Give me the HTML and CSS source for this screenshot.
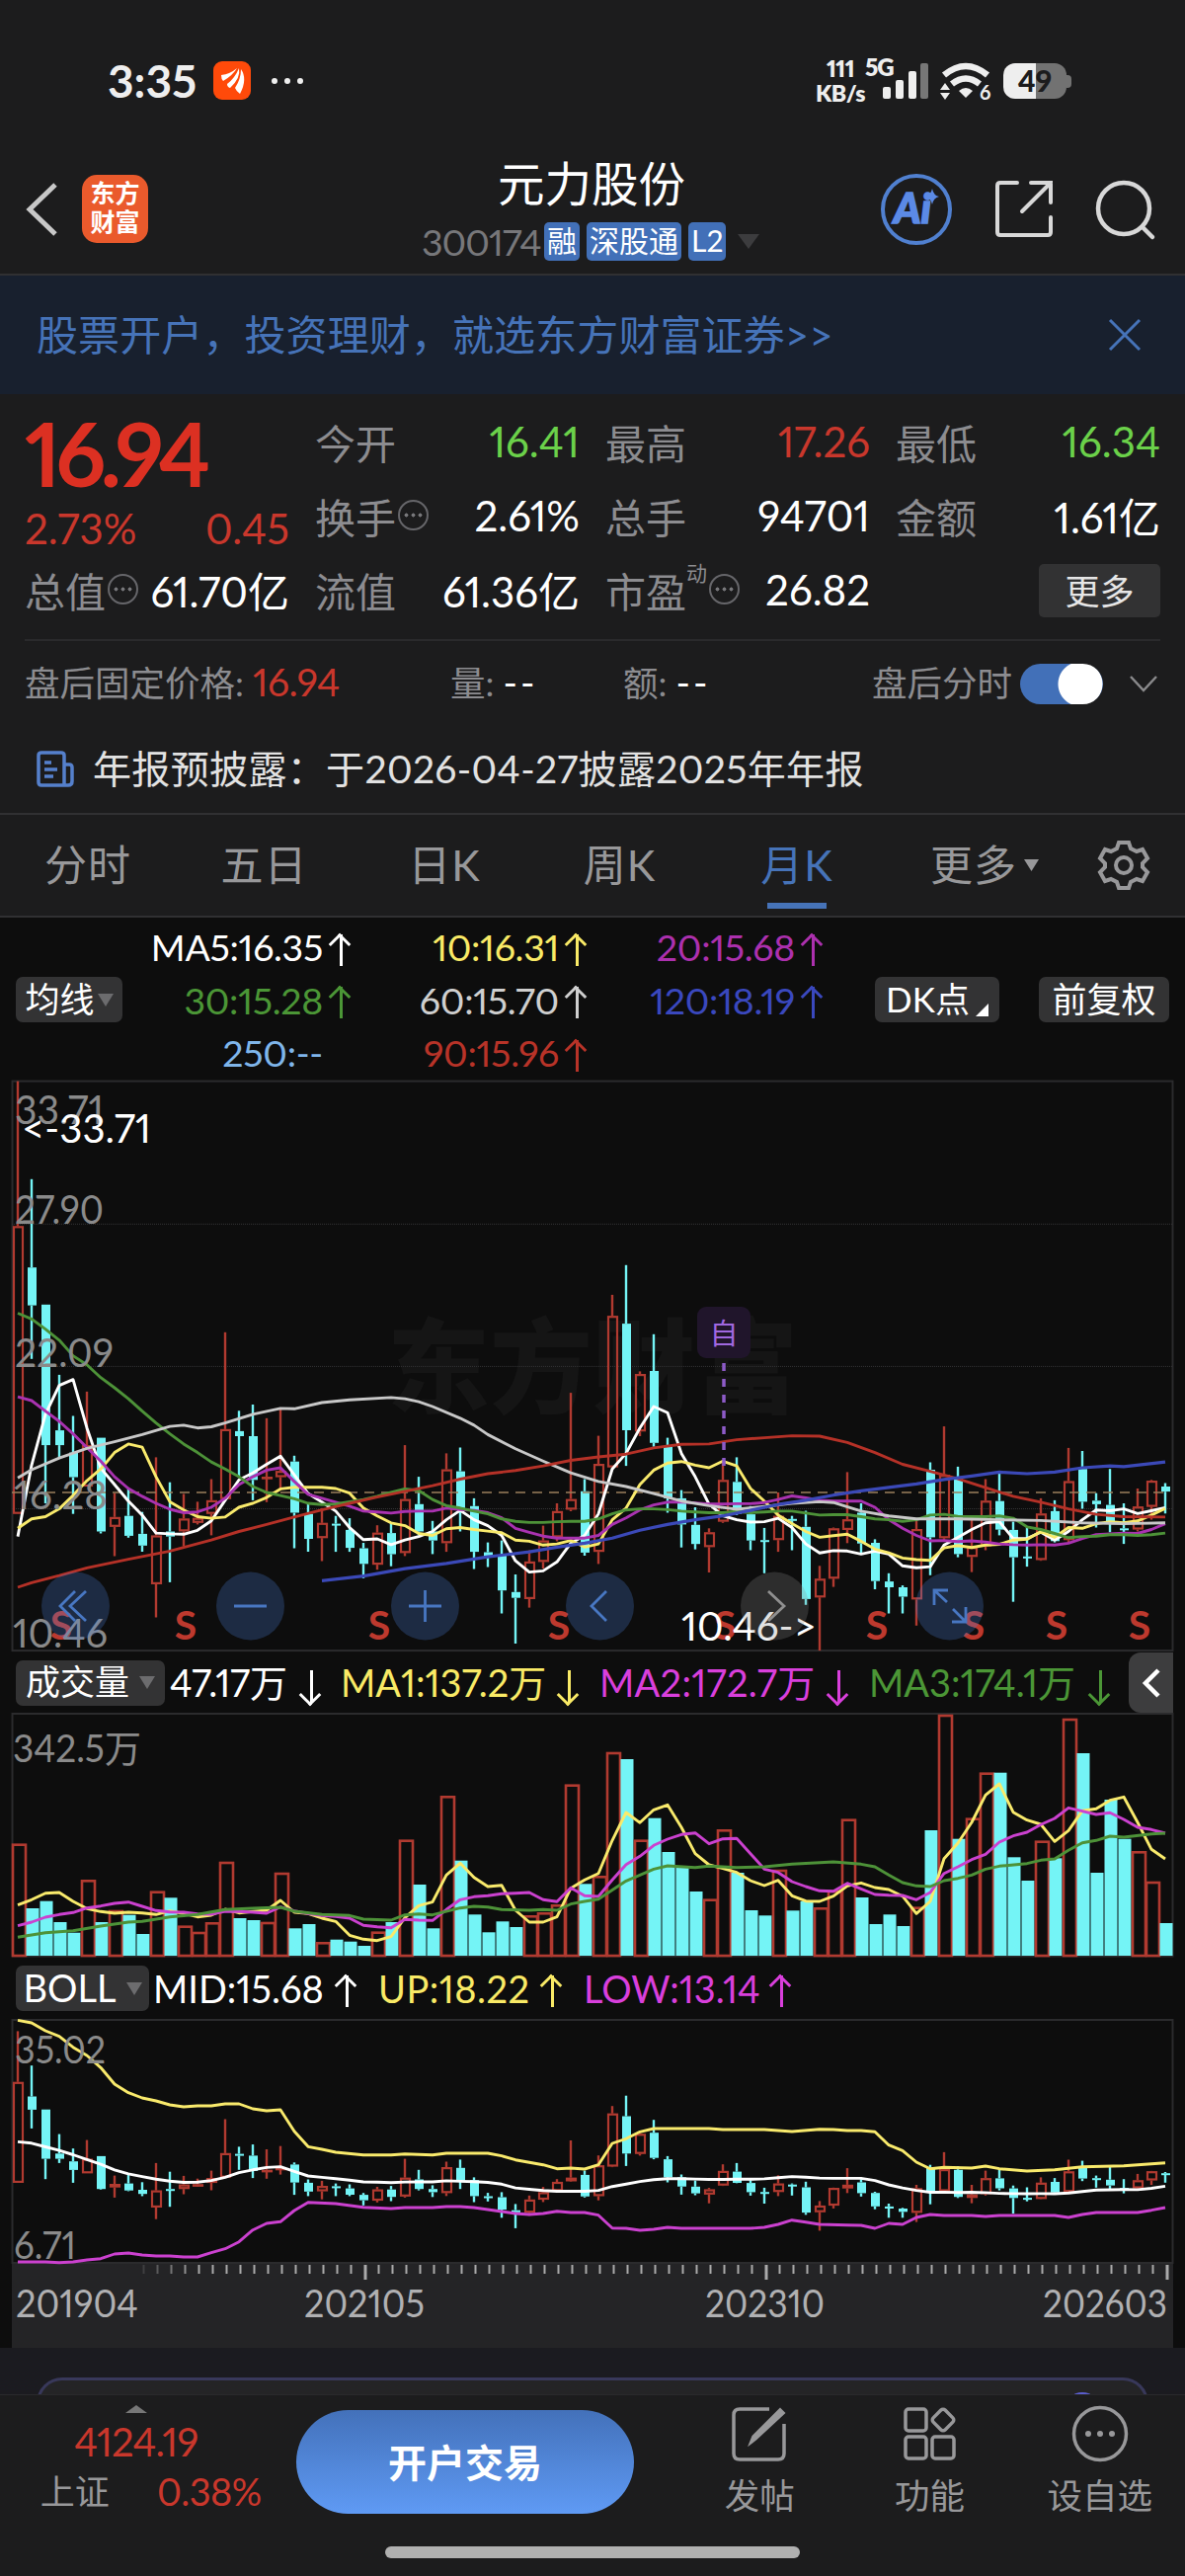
FILE: index.html
```html
<!doctype html>
<html lang="zh-CN">
<head>
  <meta charset="utf-8">
  <title>元力股份 300174</title>
  <link rel="stylesheet" href="styles.css">
</head>
<body>
  <div class="status">
    <span class="clock">3:35</span>
    <svg class="app-dot" width="38" height="39" viewBox="0 0 38 39">
      <rect width="38" height="39" rx="9" fill="#ff4a0a"/>
      <path d="M8 14Q17 13 24 7Q20 14 10 20Q8 18 8 14ZM14 23Q22 17 26 7Q28 17 17 27Q14 26 14 23ZM22 27Q28 18 28 8Q35 18 27 33Q23 30 22 27Z" fill="#fff"/>
    </svg>
    <svg width="34" height="8" viewBox="0 0 34 8" fill="#eee"><circle cx="4" cy="4" r="3"/><circle cx="17" cy="4" r="3"/><circle cx="30" cy="4" r="3"/></svg>
    <div class="net"><span>111</span><span>KB/s</span></div>
    <div class="signal">
      <b>5G</b>
      <svg width="46" height="36" viewBox="0 0 46 36" fill="#eee">
        <rect x="0" y="24" width="8" height="12" rx="2"/><rect x="13" y="17" width="8" height="19" rx="2"/><rect x="26" y="8" width="8" height="28" rx="2"/><rect x="38" y="0" width="8" height="36" rx="2" fill="#777"/>
      </svg>
    </div>
    <svg class="wifi" width="52" height="38" viewBox="0 0 52 38" fill="none" stroke="#eee">
      <path d="M4 13Q26 -5 48 13" stroke-width="6.500"/>
      <path d="M12 22Q26 11 40 22" stroke-width="6.500"/>
      <path d="M19 29Q26 23 33 29L26 36Z" fill="#eee" stroke="none"/>
      <path d="M0 28L5 21L10 28ZM0 31L5 38L10 31Z" fill="#eee" stroke="none"/>
      <text x="40" y="38" font-size="20" font-weight="700" fill="#eee" stroke="none">6</text>
    </svg>
    <div class="battery"><span>49</span></div>
  </div>

  <header class="header">
    <svg class="back" width="34" height="56" viewBox="0 0 34 56" fill="none" stroke="#c8c8c8" stroke-width="5"><path d="M30 3L4 28L30 53"/></svg>
    <div class="logo"><span>东方</span><span>财富</span></div>
    <div class="stock">
      <div class="stock-name">元力股份</div>
      <div class="stock-code"><span class="code">300174</span><i>融</i><i>深股通</i><i>L2</i><svg width="22" height="15" viewBox="0 0 22 15"><path d="M0 0H22L11 15Z" fill="#3c3c3e"/></svg></div>
    </div>
    <div class="header-icons">
      <svg width="72" height="72" viewBox="0 0 72 72">
        <circle cx="36" cy="36" r="34" fill="none" stroke="#5080d0" stroke-width="4"/>
        <text x="13" y="49.500" font-size="42" font-weight="900" font-style="italic" fill="#5b8ae6" stroke="#5b8ae6" stroke-width="1.500">Ai</text>
        <path d="M52 15Q53.500 22 59 23Q53.500 24 52 31Q50.500 24 44 23Q50.500 22 52 15Z" fill="#5b8ae6"/>
      </svg>
      <svg width="60" height="60" viewBox="0 0 60 60" fill="none" stroke="#d8d8d8" stroke-width="4" stroke-linecap="round">
        <path d="M23 3H6Q3 3 3 6V53Q3 56 6 56H54Q57 56 57 53V38"/><path d="M37 3H57V23M57 3L28 32"/>
      </svg>
      <svg width="62" height="62" viewBox="0 0 62 62" fill="none" stroke="#d8d8d8" stroke-width="4.500" stroke-linecap="round"><circle cx="29" cy="30" r="26"/><path d="M48 49L58 59"/></svg>
    </div>
  </header>

  <div class="banner">
    <span>股票开户，投资理财，就选东方财富证券&gt;&gt;</span>
    <svg width="32" height="32" viewBox="0 0 32 32" stroke="#4673b8" stroke-width="3"><path d="M1 1L31 31M31 1L1 31"/></svg>
  </div>

  <section class="quote">
    <div class="quote-grid">
      <div class="price-box">
        <div class="price">16.94</div>
        <div class="change"><span>2.73%</span><span>0.45</span></div>
      </div>
      <div class="cell"><label>今开</label><span class="green">16.41</span></div>
      <div class="cell"><label>最高</label><span class="red">17.26</span></div>
      <div class="cell"><label>最低</label><span class="green">16.34</span></div>
      <div class="cell"><label>换手<em class="tip"></em></label><span>2.61%</span></div>
      <div class="cell"><label>总手</label><span>94701</span></div>
      <div class="cell"><label>金额</label><span>1.61亿</span></div>
      <div class="cell"><label>总值<em class="tip"></em></label><span>61.70亿</span></div>
      <div class="cell"><label>流值</label><span>61.36亿</span></div>
      <div class="cell"><label>市盈<sup>动</sup><em class="tip"></em></label><span>26.82</span></div>
      <div class="cell"><button class="more-btn">更多</button></div>
    </div>
    <div class="after">
      <span class="after-price">盘后固定价格: <b>16.94</b></span>
      <span class="after-vol">量: <i>--</i></span>
      <span class="after-amt">额: <i>--</i></span>
      <span class="after-chart">盘后分时</span>
      <div class="toggle"></div>
      <svg width="30" height="18" viewBox="0 0 30 18" fill="none" stroke="#8a8a8c" stroke-width="2.500"><path d="M2 2L15 16L28 2"/></svg>
    </div>
    <div class="news">
      <svg width="38" height="38" viewBox="0 0 38 38" fill="none" stroke="#5580cc" stroke-width="3.500">
        <path d="M28 35H5Q2 35 2 32V5Q2 2 5 2H25Q28 2 28 5V35H32Q36 35 36 31V17Q36 14 33 14H28"/><path d="M8 12H15M8 19H21M8 26H17"/>
      </svg>
      <span>年报预披露：于2026-04-27披露2025年年报</span>
    </div>
  </section>

  <nav class="tabs">
    <span class="t1">分时</span><span class="t2">五日</span><span class="t3">日K</span><span class="t4">周K</span><span class="t5 active">月K</span>
    <span class="t6">更多<svg width="15" height="12" viewBox="0 0 15 12"><path d="M0 0H15L7.500 12Z" fill="#98989a"/></svg></span>
    <svg class="gear" width="52" height="52" viewBox="0 0 52 52" fill="none" stroke="#98989a" stroke-width="4">
      <path d="M21 3H31L33 9L39 12L45 10L50 19L45 24V28L50 33L45 42L39 40L33 43L31 49H21L19 43L13 40L7 42L2 33L7 28V24L2 19L7 10L13 12L19 9Z"/><circle cx="26" cy="26" r="8"/>
    </svg>
  </nav>

  <section class="ma">
    <button class="pick ma-pick">均线<u></u></button>
    <div class="ma-grid">
      <span class="white up">MA5:16.35</span><span class="yellow up">10:16.31</span><span class="purple up">20:15.68</span>
      <span class="leaf up">30:15.28</span><span class="silver up">60:15.70</span><span class="blue up">120:18.19</span>
      <span class="sky">250:--</span><span class="brick up">90:15.96</span>
    </div>
    <button class="pick dk">DK点<s></s></button>
    <button class="pick fq">前复权</button>
  </section>

  <section class="kline">
    <svg id="kline" width="1200" height="580" viewBox="0 1093 1200 580"></svg>
  </section>

  <section class="legend vol-legend">
    <button class="pick vol-pick">成交量<u></u></button>
    <span class="white down v0">47.17万</span><span class="yellow down v1">MA1:137.2万</span><span class="pink down v2">MA2:172.7万</span><span class="leaf down v3">MA3:174.1万</span>
    <div class="fold"><svg width="18" height="30" viewBox="0 0 18 30" fill="none" stroke="#fff" stroke-width="4.500"><path d="M16 2L3 15L16 28"/></svg></div>
  </section>
  <section class="sub"><svg id="vol" width="1200" height="248" viewBox="0 1734 1200 248"></svg></section>

  <section class="legend boll-legend">
    <button class="pick boll-pick">BOLL<u></u></button>
    <span class="white up b0">MID:15.68</span><span class="yellow up b1">UP:18.22</span><span class="pink up b2">LOW:13.14</span>
  </section>
  <section class="sub"><svg id="boll" width="1200" height="248" viewBox="0 2044 1200 248"></svg></section>

  <div class="axis"><svg id="axis" width="1176" height="85" viewBox="12 2292 1176 85"></svg></div>

  <div class="peek"><div class="card"><i></i></div></div>

  <footer class="footer">
    <div class="bar">
      <div class="index">
        <svg width="22" height="8" viewBox="0 0 22 8"><path d="M0 8L11 0L22 8Z" fill="#777"/></svg>
        <div class="index-val">4124.19</div>
        <div class="index-row"><span>上证</span><b>0.38%</b></div>
      </div>
      <button class="trade">开户交易</button>
      <div class="act">
        <svg width="56" height="56" viewBox="0 0 56 56" fill="none" stroke="#98989a" stroke-width="3.500"><path d="M38 3H8Q2 3 2 9V48Q2 54 8 54H47Q53 54 53 48V18"/><path d="M49 4L52 7L24 33L20 36L22 31Z" fill="#98989a"/></svg>
        <span>发帖</span>
      </div>
      <div class="act">
        <svg width="56" height="56" viewBox="0 0 56 56" fill="none" stroke="#98989a" stroke-width="3.500"><rect x="3" y="3" width="21" height="22" rx="3"/><rect x="3" y="31" width="21" height="22" rx="3"/><rect x="30" y="31" width="22" height="22" rx="3"/><rect x="32.500" y="5.500" width="17" height="17" rx="3" transform="rotate(45 41 14)"/></svg>
        <span>功能</span>
      </div>
      <div class="act">
        <svg width="58" height="58" viewBox="0 0 58 58" fill="none" stroke="#98989a" stroke-width="3.500"><circle cx="29" cy="29" r="26.500"/><g fill="#98989a" stroke="none"><circle cx="17" cy="29" r="3"/><circle cx="29" cy="29" r="3"/><circle cx="41" cy="29" r="3"/></g></svg>
        <span>设自选</span>
      </div>
    </div>
    <div class="home"></div>
  </footer>
  <script src="chart.js"></script>
</body>
</html>
```
FILE: styles.css
```css
:root {
  --bg: #1c1c1d;
  --chart: #0d0d0d;
  --line: #303032;
  --grey: #8c8c90;
  --red: #c9372c;
  --blue: #4673b8;
}
* {
  box-sizing: border-box;
}
body {
  margin: 0;
  width: 1200px;
  height: 2608px;
  overflow: hidden;
  background: var(--chart);
  color: #fff;
  font-family: Lato, "Noto Sans CJK SC", sans-serif;
  font-variant-numeric: proportional-nums;
}
svg {
  display: block;
  flex: none;
  overflow: visible;
}
svg text {
  font-family: Lato, "Noto Sans CJK SC", sans-serif;
}
button {
  border: none;
  padding: 0;
  font-family: inherit;
  color: #fff;
}
i, em {
  font-style: normal;
}
.red { color: var(--red); }
.green { color: #6bd14a; }
.white { color: #fff; }
.yellow { color: #f9ea66; }
.purple { color: #ac30ae; }
.pink { color: #d93fdc; }
.leaf { color: #4b9636; }
.silver { color: #cfcfcf; }
.blue { color: #3a48be; }
.sky { color: #7fb5ea; }
.brick { color: #b83328; }

/* status bar */
.status {
  height: 148px;
  padding: 15px 120px 0 109px;
  background: var(--bg);
  display: flex;
  align-items: center;
  color: #eee;
}
.clock {
  width: 107px;
  font-size: 46px;
  font-weight: 700;
  letter-spacing: 0;
}
.app-dot {
  margin-right: 20px;
}
.net {
  width: 54px;
  margin-left: auto;
  display: flex;
  flex-direction: column;
  align-items: center;
  font-size: 23px;
  font-weight: 800;
  line-height: 25px;
  letter-spacing: -0.5px;
}
.signal {
  width: 62px;
  position: relative;
  display: flex;
  justify-content: flex-end;
}
.signal b {
  position: absolute;
  left: -2px;
  top: -9px;
  font-size: 24px;
  font-weight: 800;
  line-height: 25px;
  letter-spacing: -1px;
}
.wifi {
  margin: 0 12px;
}
.battery {
  width: 64px;
  height: 36px;
  border-radius: 12px;
  background: linear-gradient(90deg, #eee 52%, #727272 52%);
  color: #1c1c1d;
  font-size: 30px;
  font-weight: 900;
  line-height: 35px;
  text-align: center;
  position: relative;
}
.battery::after {
  content: "";
  position: absolute;
  left: 64px;
  top: 12px;
  width: 5px;
  height: 13px;
  border-radius: 0 4px 4px 0;
  background: #727272;
}

/* header */
.header {
  height: 131px;
  padding: 0 29px 2px 26px;
  display: flex;
  align-items: center;
  background: var(--bg);
  border-bottom: 2px solid var(--line);
}
.logo {
  width: 67px;
  height: 69px;
  margin-left: 23px;
  padding-top: 4px;
  border-radius: 15px;
  background: #ea5a2c;
  font-size: 25px;
  font-weight: 700;
  line-height: 29px;
  text-align: center;
}
.logo span {
  display: block;
}
.stock {
  flex: 1;
  padding: 0 0 2px 278px;
}
.stock-name {
  width: 342px;
  font-size: 47.500px;
  line-height: 62px;
  text-align: center;
}
.stock-code {
  height: 44px;
  margin-top: 5px;
  display: flex;
  align-items: center;
}
.code {
  width: 124px;
  margin-left: -1px;
  color: #77777a;
  font-size: 37.500px;
  letter-spacing: -1px;
}
.stock-code i {
  height: 39px;
  margin-right: 7px;
  padding: 0 3px;
  border-radius: 5px;
  background: #4270b8;
  font-size: 30px;
  line-height: 36px;
}
.stock-code svg {
  margin-left: 5px;
}
.header-icons {
  display: flex;
  align-items: center;
  gap: 42px;
}
.header-icons svg:first-child {
  margin-right: 1px;
}

.banner {
  height: 120px;
  padding: 0 45px 0 37px;
  display: flex;
  align-items: center;
  justify-content: space-between;
  background: #18202e;
  color: var(--blue);
  font-size: 42px;
  letter-spacing: 0.100px;
}
.banner span {
  padding-bottom: 6px;
}

/* quote */
.quote {
  height: 426px;
  background: var(--bg);
  border-bottom: 2px solid var(--line);
}
.quote-grid {
  height: 250px;
  margin: 0 25px;
  padding-top: 12px;
  border-bottom: 2px solid #2a2a2c;
  display: grid;
  grid-template-columns: repeat(4, 268px);
  grid-template-rows: repeat(3, 75px);
  column-gap: 26px;
}
.price-box {
  grid-row: span 2;
}
.price {
  height: 96px;
  color: #dc3022;
  font-size: 89px;
  font-weight: 700;
  line-height: 96px;
  letter-spacing: -5.500px;
}
.change {
  display: flex;
  justify-content: space-between;
  color: var(--red);
  font-size: 42px;
  line-height: 56px;
}
.cell {
  padding-bottom: 4px;
  display: flex;
  align-items: center;
  justify-content: space-between;
  font-size: 42px;
  white-space: nowrap;
}
.cell label {
  display: flex;
  align-items: center;
  color: var(--grey);
  font-size: 41px;
}
.cell sup {
  align-self: flex-start;
  font-size: 21px;
  line-height: 26px;
}
.tip {
  width: 31px;
  height: 31px;
  margin-left: 2px;
  padding: 0 3px;
  border: 2px solid #66666a;
  border-radius: 50%;
  background: radial-gradient(circle, #77777a 1.800px, transparent 2.200px) center / 7px 7px repeat-x;
  background-clip: content-box;
}
.more-btn {
  width: 123px;
  height: 54px;
  margin: 2px 0 0 auto;
  padding-bottom: 3px;
  border-radius: 5px;
  background: #323233;
  color: #e6e6e6;
  font-size: 35px;
}
.after {
  height: 86px;
  padding-left: 25px;
  display: flex;
  align-items: center;
  color: var(--grey);
  font-size: 35.500px;
}
.after span {
  padding-bottom: 6px;
}
.after b {
  color: var(--red);
  font-weight: 400;
  font-size: 39px;
  letter-spacing: -0.500px;
}
.after i {
  color: #fff;
  font-size: 39px;
  letter-spacing: 3px;
}
.after-price { width: 431px; }
.after-vol { width: 175px; }
.after-amt { width: 252px; }
.after-chart { width: 150px; }
.toggle {
  width: 84px;
  height: 41px;
  margin-right: 26px;
  border-radius: 21px;
  background: radial-gradient(circle at 61px 50%, #fff 22px, transparent 23px) #4270b8;
}
.news {
  height: 87px;
  padding-left: 37px;
  display: flex;
  align-items: center;
  gap: 19px;
  color: #e2e2e2;
  font-size: 39px;
}
.news span {
  padding-bottom: 5px;
  letter-spacing: 0.350px;
}

/* period tabs */
.tabs {
  height: 104px;
  display: flex;
  align-items: center;
  background: var(--bg);
  border-bottom: 2px solid var(--line);
  color: #98989a;
  font-size: 43px;
}
.tabs span {
  text-align: center;
  line-height: 102px;
  letter-spacing: 1px;
}
.t1 { width: 178px; }
.t2 { width: 179px; }
.t3 { width: 186px; }
.t4 { width: 169px; }
.t5 { width: 190px; }
.t6 {
  width: 190px;
  display: flex;
  align-items: center;
  justify-content: center;
  gap: 7px;
}
.active {
  color: var(--blue);
  background: linear-gradient(var(--blue), var(--blue)) center 89px / 60px 6px no-repeat;
}
.gear {
  margin-left: 20px;
}

/* indicator rows */
.pick {
  flex: none;
  height: 46px;
  padding-bottom: 3px;
  border-radius: 7px;
  background: #333334;
  font-size: 35px;
  line-height: 42px;
  display: flex;
  align-items: center;
  justify-content: center;
}
.pick u {
  margin: 3px 0 0 10px;
  border: 8px solid transparent;
  border-top: 13px solid #6c6c6e;
  border-bottom: 0;
}
.ma {
  height: 164px;
  padding: 2px 16px 0;
  display: flex;
  align-items: center;
}
.ma-pick {
  width: 108px;
}
.ma .ma-pick u {
  margin-left: 3px;
}
.ma-grid {
  width: 709px;
  display: grid;
  grid-template-columns: 231px 239px 239px;
  grid-template-rows: repeat(3, 53.500px);
  align-items: center;
  font-size: 37.500px;
  letter-spacing: -0.300px;
}
.ma-grid span {
  padding-right: 28px;
  text-align: right;
}
.up, .down {
  position: relative;
}
/* stem and head of the trend arrow */
.up::before, .down::before {
  content: "";
  position: absolute;
  right: 8px;
  top: calc(50% - 13px);
  width: 3px;
  height: 32px;
  background: currentColor;
}
.up::after, .down::after {
  content: "";
  position: absolute;
  right: 3px;
  top: calc(50% - 11px);
  width: 13px;
  height: 13px;
  border-left: 3px solid;
  border-top: 3px solid;
  transform: rotate(45deg);
}
.down::after {
  top: calc(50% + 4px);
  transform: rotate(225deg);
}
.dk {
  width: 126px;
  margin-left: 53px;
}
.dk s {
  align-self: flex-end;
  margin: 0 0 3px 6px;
  border-left: 13px solid transparent;
  border-bottom: 13px solid #fff;
}
.fq {
  width: 132px;
  margin-left: 40px;
}
.kline {
  height: 580px;
}
.sub {
  height: 248px;
}
.legend {
  padding-left: 16px;
  display: flex;
  align-items: center;
  font-size: 38px;
  white-space: nowrap;
}
.legend > span {
  padding-bottom: 5px;
}
.vol-legend {
  height: 61px;
}
.boll-legend {
  height: 62px;
}
.boll-legend > span {
  padding-bottom: 1px;
}
.vol-pick { width: 151px; }
.boll-pick { width: 135px; font-size: 38px; }
.v0 { width: 153px; margin-left: 5px; letter-spacing: -0.200px; }
.v1 { width: 241px; margin-left: 20px; }
.v2 { width: 252px; margin-left: 21px; letter-spacing: 0.300px; }
.v3 { width: 244px; margin-left: 21px; }
.b0 { width: 206px; margin-left: 4px; }
.b1 { width: 186px; margin-left: 22px; letter-spacing: 0.500px; }
.b2 { width: 210px; margin-left: 22px; }
.fold {
  width: 45px;
  height: 61px;
  margin-left: 19px;
  padding: 16px 0 0 14px;
  border-radius: 12px 0 0 12px;
  background: #3d3d3e;
}
.axis {
  height: 85px;
  margin: 0 12px;
  background: #242426;
}

/* top of the card below the fold */
.peek {
  height: 47px;
  padding: 30px 37px 0;
  background: #1b1b20;
  overflow: hidden;
}
.card {
  height: 60px;
  border: 3px solid #38385a;
  border-radius: 26px;
  background: #242426;
}
.card i {
  display: block;
  width: 36px;
  height: 36px;
  margin: 12px 46px 0 auto;
  border-radius: 50%;
  background: #5b5ed0;
}
.footer {
  height: 184px;
  background: var(--bg);
  border-top: 1px solid #2a2a2c;
  color: #98989a;
}
.bar {
  height: 153px;
  display: flex;
}
.index {
  width: 276px;
  padding-top: 10px;
  display: flex;
  flex-direction: column;
  align-items: center;
}
.index-val {
  margin-top: 5px;
  color: var(--red);
  font-size: 40px;
  line-height: 48px;
  letter-spacing: -0.800px;
}
.index-row {
  width: 224px;
  margin-left: 30px;
  display: flex;
  justify-content: space-between;
  font-size: 35px;
  line-height: 52px;
}
.index-row b {
  color: var(--red);
  font-size: 38px;
  font-weight: 400;
  letter-spacing: -0.500px;
}
.trade {
  width: 343px;
  height: 105px;
  margin: 15px 41px 0 24px;
  padding-bottom: 4px;
  border-radius: 53px;
  background: linear-gradient(#4371ba, #5f9af4);
  font-size: 39px;
  font-weight: 700;
}
.act {
  width: 172.500px;
  padding-top: 10px;
  display: flex;
  flex-direction: column;
  align-items: center;
  font-size: 35.500px;
  line-height: 52px;
}
.act svg {
  height: 58px;
}
.act span {
  margin-top: 8px;
}
.home {
  width: 420px;
  height: 12px;
  margin: 0 auto;
  border-radius: 6px;
  background: #b0b0b0;
}
```
FILE: chart.js
```js
// month candles 201904 - 202603: [direction, high, body top, body bottom, low]
// values are depth units, 37 = 33.71 and 1495 = 10.46
var candles = [
  ['u',37,408,1145,1145],['d',288,514,611,748],['d',609,609,969,1118],['d',789,931,969,1000],['d',894,988,1051,1145],['u',832,969,1075,1075],
  ['d',950,950,1190,1195],['u',1092,1153,1178,1253],['d',1080,1150,1201,1206],['d',1140,1196,1226,1242],['u',1000,1200,1325,1410],['d',1064,1190,1203,1320],
  ['u',1094,1157,1190,1228],['u',1114,1155,1168,1172],['u',1056,1110,1145,1200],['u',680,928,1107,1107],['d',881,933,946,1050],['d',865,946,1058,1110],
  ['u',900,1050,1053,1115],['u',876,1035,1051,1085],['d',996,1011,1142,1233],['d',1120,1145,1209,1242],['u',1130,1168,1207,1266],['d',1150,1170,1172,1242],
  ['d',1156,1186,1232,1242],['d',1219,1233,1273,1310],['u',1174,1193,1275,1288],['d',1168,1194,1248,1279],['u',969,1107,1245,1253],['d',1050,1120,1190,1200],
  ['d',1163,1190,1213,1248],['u',990,1031,1220,1242],['d',975,1036,1130,1190],['d',1105,1125,1242,1286],['d',1218,1243,1253,1281],['d',1213,1250,1341,1400],
  ['d',1300,1345,1360,1477],['u',1238,1267,1363,1385],['u',1175,1213,1268,1285],['u',1118,1138,1205,1215],['u',835,1107,1134,1138],['d',1056,1087,1244,1252],
  ['u',945,1017,1242,1273],['u',584,638,1026,1030],['d',508,658,931,1022],['u',780,787,934,946],['d',685,779,963,973],['d',950,973,1105,1142],
  ['d',1084,1105,1172,1231],['d',1128,1173,1222,1236],['u',1182,1192,1230,1295],['u',1010,1058,1165,1168],['d',1000,1063,1145,1148],['d',1125,1146,1213,1238],
  ['d',1181,1212,1215,1297],['u',1090,1150,1212,1242],['d',1150,1158,1162,1238],['d',1137,1178,1363,1378],['u',1278,1311,1359,1495],['u',1180,1182,1311,1332],
  ['u',1038,1159,1186,1220],['d',1118,1142,1221,1245],['d',1210,1219,1317,1338],['d',1297,1318,1333,1400],['d',1328,1333,1357,1400],['u',1160,1184,1364,1431],
  ['d',1013,1032,1205,1302],['u',921,1045,1207,1215],['d',1024,1050,1248,1256],['u',1160,1230,1255,1294],['u',1056,1111,1228,1238],['d',1042,1112,1185,1200],
  ['d',1165,1186,1256,1370],['d',1178,1254,1257,1280],['u',1105,1144,1263,1265],['d',1110,1138,1215,1218],['u',976,1061,1212,1220],['d',984,1030,1114,1132],
  ['d',1092,1111,1120,1180],['d',1030,1122,1164,1192],['d',1118,1182,1185,1222],['u',1080,1126,1185,1190],['u',1058,1060,1127,1160],['d',1066,1075,1088,1144]
];
var ma5 = [1203,1020,890,816,801,925,1028,1070,1112,1148,1194,1196,1197,1187,1163,1110,1058,1040,1018,997,1045,1093,1115,1138,1180,1211,1209,1224,1212,1203,1190,1160,1136,1160,1175,1200,1265,1294,1291,1268,1220,1200,1145,1030,990,925,870,886,990,1050,1120,1150,1160,1166,1165,1156,1180,1222,1245,1239,1240,1248,1240,1248,1278,1283,1280,1225,1205,1185,1168,1165,1208,1208,1192,1212,1190,1160,1135,1137,1132,1144,1137,1129];
var ma10 = [1182,1158,1152,1132,1098,1060,1030,988,966,974,1050,1114,1135,1152,1156,1153,1128,1118,1103,1081,1077,1077,1077,1080,1092,1130,1150,1168,1175,1195,1200,1183,1180,1185,1189,1193,1212,1215,1225,1222,1213,1230,1222,1160,1130,1070,1033,1015,1011,1020,1027,1010,1022,1080,1112,1148,1170,1190,1205,1201,1197,1215,1235,1245,1258,1262,1264,1232,1226,1231,1225,1223,1212,1210,1190,1205,1180,1182,1170,1165,1168,1163,1148,1131];
var ma20 = [845,855,882,908,940,975,1010,1050,1080,1100,1118,1133,1142,1140,1128,1105,1070,1050,1033,1027,1062,1095,1105,1115,1125,1138,1140,1143,1139,1138,1138,1130,1134,1136,1142,1155,1182,1192,1202,1207,1207,1207,1200,1172,1155,1135,1122,1115,1115,1117,1120,1120,1119,1119,1116,1108,1099,1104,1110,1112,1112,1112,1128,1160,1182,1200,1214,1213,1216,1214,1217,1222,1224,1225,1224,1225,1220,1208,1198,1196,1194,1195,1185,1170];
var ma30 = [631,646,672,700,740,763,796,822,850,882,912,940,966,988,1012,1030,1050,1075,1090,1098,1106,1118,1121,1120,1114,1108,1100,1090,1081,1085,1108,1124,1130,1138,1145,1158,1164,1167,1167,1165,1164,1164,1158,1145,1135,1132,1132,1134,1138,1140,1142,1142,1139,1142,1140,1138,1138,1143,1148,1147,1147,1152,1158,1160,1164,1160,1148,1146,1151,1152,1152,1150,1156,1178,1185,1195,1206,1203,1202,1198,1198,1200,1198,1194];
// slower averages are kept as [month, value] knots
var ma60 = [[0,1053],[1,1032],[3,1002],[5,977],[7,960],[9,942],[11,921],[12,918],[13,925],[14,922],[15,912],[17,890],[19,875],[20,876],[22,860],[24,853],[27,847],[28,850],[29,858],[30,870],[32,900],[33,918],[34,942],[36,978],[38,1010],[40,1040],[42,1062],[44,1075],[46,1093],[48,1112],[50,1124],[52,1133],[54,1126],[56,1118],[58,1114],[59,1116],[61,1138],[63,1150],[65,1158],[68,1158],[71,1160],[74,1162],[77,1168],[80,1170],[83,1168]];
var ma90 = [[0,1333],[1,1321],[3,1303],[5,1283],[8,1261],[11,1240],[14,1212],[16,1190],[18,1172],[20,1153],[22,1135],[24,1118],[26,1102],[28,1087],[30,1073],[32,1056],[34,1042],[36,1034],[38,1022],[40,1008],[42,999],[44,992],[46,976],[48,967],[50,966],[52,955],[54,950],[56,945],[58,946],[60,962],[62,988],[64,1018],[66,1036],[68,1055],[70,1078],[72,1100],[74,1115],[76,1132],[78,1146],[80,1152],[83,1153]];
var ma120 = [[22,1316],[25,1304],[28,1285],[31,1272],[34,1255],[37,1242],[39,1230],[41,1220],[43,1207],[45,1187],[47,1172],[49,1160],[51,1150],[53,1136],[55,1121],[57,1110],[59,1097],[61,1086],[63,1077],[65,1068],[67,1057],[69,1048],[71,1038],[73,1042],[75,1038],[77,1027],[79,1022],[80,1024],[83,1012]];

// volume panel, depth in thirds of a pixel, 960 = empty
var volume = [620,816,794,858,890,730,858,822,836,894,764,784,869,888,859,675,846,852,858,708,877,864,919,911,917,930,887,858,608,744,877,475,671,835,889,856,873,838,829,805,440,742,718,342,363,608,542,645,690,765,788,577,708,822,838,699,823,795,814,762,545,783,864,835,870,812,579,228,605,542,404,404,661,732,611,664,240,345,708,486,605,643,735,861];
var vma1 = [806,790,770,768,795,817,826,831,828,830,835,824,832,842,837,819,830,826,822,792,828,832,846,856,898,910,914,902,845,808,797,715,679,722,750,746,822,858,858,842,755,730,710,610,525,556,517,502,570,650,684,695,707,732,747,731,778,794,795,779,748,739,753,759,779,832,795,665,618,555,472,438,524,548,561,613,580,520,514,488,478,555,637,666];
var vma2 = [869,858,843,835,829,815,809,801,797,810,823,827,828,833,834,825,826,828,831,812,824,832,838,841,846,868,872,875,850,852,853,820,790,781,778,772,770,768,790,796,754,778,780,730,683,658,625,606,592,587,620,605,604,650,697,707,735,750,763,764,740,757,774,776,777,790,768,710,690,668,652,615,596,585,562,543,511,521,531,526,546,570,577,588];
var vma3 = [[0,904],[2,890],[4,884],[6,870],[8,858],[9,856],[11,842],[13,835],[15,820],[17,816],[19,813],[20,825],[22,835],[24,838],[25,849],[27,852],[28,836],[29,833],[30,836],[32,815],[33,810],[34,812],[35,820],[37,822],[38,820],[39,822],[40,803],[41,795],[42,788],[44,733],[46,697],[47,687],[49,692],[50,688],[52,692],[54,690],[56,682],[59,675],[61,682],[62,690],[63,715],[64,738],[65,748],[66,750],[67,732],[68,725],[69,715],[70,697],[71,688],[73,680],[74,670],[75,666],[76,640],[77,617],[78,610],[79,597],[80,600],[82,590],[83,588]];
var bollUp = [[0,196],[1,204],[2,228],[3,245],[4,278],[5,303],[6,340],[7,390],[8,416],[9,432],[10,441],[11,453],[12,459],[13,456],[14,456],[15,450],[16,450],[17,465],[18,471],[19,468],[20,533],[21,580],[22,588],[23,597],[25,605],[27,605],[28,602],[30,605],[31,600],[34,600],[35,608],[36,620],[38,635],[39,647],[40,645],[41,648],[42,635],[43,570],[44,556],[45,535],[46,525],[50,525],[51,528],[54,528],[56,534],[58,527],[59,528],[60,531],[61,531],[62,535],[63,575],[64,592],[65,627],[66,647],[67,643],[69,645],[70,639],[71,647],[73,654],[75,650],[77,641],[80,638],[83,629]];
var bollLow = [[0,930],[2,930],[3,932],[4,930],[5,924],[6,920],[7,906],[8,903],[9,909],[10,912],[11,912],[12,915],[13,915],[14,902],[15,890],[16,869],[17,833],[18,813],[19,808],[20,774],[21,749],[23,753],[25,764],[27,768],[28,765],[30,765],[31,762],[32,762],[33,765],[34,771],[35,777],[36,783],[37,786],[38,783],[39,776],[40,780],[41,780],[42,788],[43,827],[44,828],[45,834],[46,831],[47,825],[48,828],[53,828],[54,825],[55,816],[56,803],[57,809],[58,816],[60,818],[61,819],[62,828],[63,813],[64,816],[65,795],[66,786],[67,789],[69,789],[70,792],[71,789],[75,789],[76,795],[77,786],[78,780],[81,780],[82,773],[83,765]];

var RED = '#b13a30', CYAN = '#74f4f6', WHITE = '#fff', YELLOW = '#f9ea6c', PURPLE = '#a932b0', PINK = '#cb41cf', GREEN = '#4d9238';

function x(i) { return 18 + 14 * i; }
function yK(v) { return 1094.600 + (v - 37) * 0.3954; }
function yVol(v) { return 1660 + v / 3; }
function yBoll(v) { return 1980 + v / 3; }
// same candles on the BOLL price scale
function yBollK(v) { return 2056.400 + (v - 37) * 0.015947 * 8.690; }

function path(data, y, color, width) {
  var pts = data.map(function (d, i) {
    return Array.isArray(d) ? x(d[0]) + ',' + y(d[1]).toFixed(1) : x(i) + ',' + y(d).toFixed(1);
  });
  return '<polyline points="' + pts.join(' ') + '" fill="none" stroke="' + color + '" stroke-width="' + (width || 2.900) + '" stroke-linejoin="round"/>';
}
function rect(l, t, w, h, attrs) {
  return '<rect x="' + l + '" y="' + t.toFixed(1) + '" width="' + w + '" height="' + h.toFixed(1) + '" ' + attrs + '/>';
}
function frame(top, height) {
  return rect(12.500, top, 1175, height, 'fill="none" stroke="#2b2b2d" stroke-width="2"');
}
function label(str, left, base, len, size, color) {
  return '<text x="' + left + '" y="' + base + '" textLength="' + len + '" lengthAdjust="spacingAndGlyphs" font-size="' + size + '" fill="' + color + '">' + str + '</text>';
}
function drawCandles(y) {
  return candles.map(function (c, i) {
    var up = c[0] === 'u', color = up ? RED : CYAN, cx = x(i);
    var hi = y(c[1]), top = y(c[2]), bot = y(c[3]), lo = y(c[4]);
    var out = '';
    if (hi < top) out += rect(cx - 1.200, hi, 2.400, top - hi, 'fill="' + color + '"');
    if (lo > bot) out += rect(cx - 1.200, bot, 2.400, lo - bot, 'fill="' + color + '"');
    if (up) out += rect(cx - 4, top + 1, 9, Math.max(bot - top - 2, 0.5), 'fill="none" stroke="' + color + '" stroke-width="2.200"');
    else out += rect(cx - 4, top, 9, Math.max(bot - top, 2), 'fill="' + color + '"');
    return out;
  }).join('');
}

function drawKline() {
  var s = '<text x="600" y="1423" text-anchor="middle" textLength="416" font-size="104" font-weight="900" fill="#151515">东方财富</text>';
  s += frame(1094.600, 576.500);
  [1239.300, 1383.400, 1527.500].forEach(function (y) {
    s += '<path d="M12 ' + y + 'H1188" stroke="#343436" stroke-dasharray="1 1"/>';
  });
  s += drawCandles(yK);
  s += '<path d="M12 1511H1180" stroke="#9b7f5c" stroke-width="1.500" stroke-dasharray="10 7"/>';
  s += path(ma5, yK, WHITE) + path(ma10, yK, YELLOW) + path(ma20, yK, PURPLE) + path(ma30, yK, GREEN);
  s += path(ma60, yK, '#c8c8c8') + path(ma90, yK, '#b53127') + path(ma120, yK, '#3b49b8', 3.200);
  // watchlist flag
  s += rect(706, 1323, 54, 52, 'rx="9" fill="#20152b"');
  s += '<text x="733" y="1361" text-anchor="middle" font-size="29" fill="#a068e0">自</text>';
  s += '<path d="M733 1380V1484" stroke="#8d5bc8" stroke-width="3.500" stroke-dasharray="8 8"/>';
  s += label('33.71', 15, 1138, 90, 40, '#8a8a8a') + label('27.90', 15, 1239, 90, 40, '#8a8a8a') + label('22.09', 15, 1384, 100, 40, '#8a8a8a');
  s += label('16.28', 14, 1528, 95, 40, '#8a8a8a');
  s += label('&lt;-33.71', 22, 1157, 131, 40, '#fff');
  [62, 188, 384, 566, 734, 888, 986, 1070, 1154].forEach(function (cx) {
    s += '<text x="' + cx + '" y="1660" text-anchor="middle" font-size="41" font-weight="700" fill="#bd392e">S</text>';
  });
  s += label('10.46', 13, 1668, 96, 40, '#8a8a8a') + label('10.46-&gt;', 690, 1661, 137, 40, '#fff');
  // chart controls
  var icons = ['M87 1611L71 1626L87 1641M76 1611L61 1626L76 1641', 'M237 1626H270', 'M414 1626H447M430.500 1610V1642', 'M614 1611L599 1626L614 1641', 'M778 1611L794 1626L778 1641', 'M946 1625V1610H960M946 1610L959 1622M978 1627V1642H964M978 1642L965 1629'];
  [76.500, 253.500, 430.500, 607.500, 784.500, 961.500].forEach(function (cx, i) {
    s += '<circle cx="' + cx + '" cy="1626" r="34.500" fill="' + (i === 4 ? '#8a8a8a' : '#4d85e0') + '" fill-opacity=".26"/>';
    s += '<path d="' + icons[i] + '" fill="none" stroke="' + (i === 4 ? '#909090' : '#4877c2') + '" stroke-width="2.800"/>';
  });
  return s;
}

function drawVolume() {
  var s = frame(1735, 245.500);
  candles.forEach(function (c, i) {
    var t = yVol(volume[i]);
    if (c[0] === 'u') s += rect(x(i) - 5, t + 1, 13, 1979 - t, 'fill="none" stroke="' + RED + '" stroke-width="2.600"');
    else s += rect(x(i) - 5.500, t, 13, 1980 - t, 'fill="' + CYAN + '"');
  });
  s += path(vma1, yVol, YELLOW) + path(vma2, yVol, PINK) + path(vma3, yVol, GREEN);
  return s + label('342.5万', 13, 1784, 130, 38, '#8a8a8a');
}

function drawBoll() {
  var s = frame(2045, 246);
  s += drawCandles(yBollK);
  s += path(bollUp, yBoll, YELLOW) + path(ma20, yBollK, WHITE) + path(bollLow, yBoll, PINK);
  return s + label('35.02', 15, 2089, 92, 38, '#8a8a8a') + label('6.71', 14, 2287, 63, 38, '#8a8a8a');
}

function drawAxis() {
  var s = '';
  for (var i = 9; i < 84; i++) {
    var big = i === 25 || i === 54 || i === 83;
    s += rect(x(i) + 0.500, 2293, big ? 3 : 2, big ? 15 : 9, 'fill="#aaa" opacity="' + Math.min(1, (i - 8) / 5) + '"');
  }
  s += label('201904', 16, 2346, 124, 38, '#b0b0b2') + label('202105', 308, 2346, 122, 38, '#b0b0b2');
  return s + label('202310', 714, 2346, 121, 38, '#b0b0b2') + label('202603', 1056, 2346, 126, 38, '#b0b0b2');
}

document.getElementById('kline').innerHTML = drawKline();
document.getElementById('vol').innerHTML = drawVolume();
document.getElementById('boll').innerHTML = drawBoll();
document.getElementById('axis').innerHTML = drawAxis();
```
